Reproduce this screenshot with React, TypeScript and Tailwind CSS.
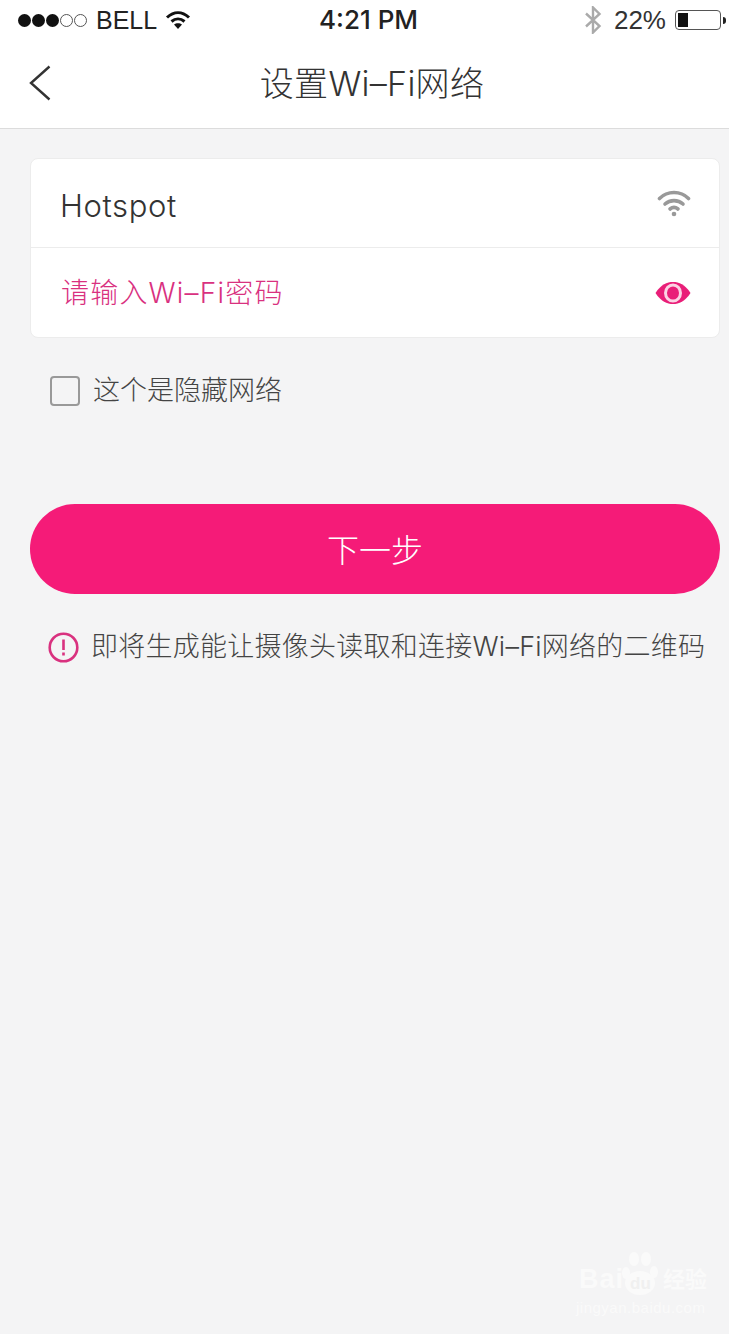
const cjk = "font-['Inter','Noto_Sans_CJK_SC',sans-serif]";

const StatusBar = () => (
  <div className="grid h-10 grid-cols-3 items-center pl-[18px] pr-[3px] font-['Liberation_Sans',sans-serif] text-[26px] text-[#222]">
    <div className="flex items-center">
      <div className="flex items-center gap-[1px]">
        <span className="h-[13px] w-[13px] rounded-full bg-[#111]" />
        <span className="h-[13px] w-[13px] rounded-full bg-[#111]" />
        <span className="h-[13px] w-[13px] rounded-full bg-[#111]" />
        <span className="h-[13px] w-[13px] rounded-full border border-[#555]" />
        <span className="h-[13px] w-[13px] rounded-full border border-[#555]" />
      </div>
      <span className="ml-[9px] text-[25px] leading-none">BELL</span>
      <svg className="ml-[8px]" width="26" height="20" viewBox="0 0 26 20" fill="none" stroke="#111" strokeWidth="3">
        <path d="M2 7.500C9 1 17 1 24 7.500" />
        <path d="M6.500 11.500C10.500 8 15.500 8 19.500 11.500" />
        <path d="M13 19l-4-4.500c2.300-1.800 5.700-1.800 8 0z" fill="#111" stroke="none" />
      </svg>
    </div>
    <div className="pl-[65px] font-['Inter',sans-serif] text-[26px] leading-none font-medium whitespace-nowrap text-[#222]">4:21 PM</div>
    <div className="flex items-center justify-end">
      <svg width="18" height="28" viewBox="0 0 18 28" fill="none" stroke="#aaa" strokeWidth="2.400">
        <path d="M2 7.500L15.500 20 9 26.500V1.500L15.500 8 2 20.500" />
      </svg>
      <span className="ml-[12px] text-[26px] leading-none text-[#333]">22%</span>
      <div className="ml-[9px] flex items-center">
        <div className="h-[20px] w-[46px] rounded-[4px] border border-[#555] p-[2px]">
          <div className="h-full w-[10px] bg-[#111]" />
        </div>
        <div className="ml-[2px] h-[7px] w-[3px] rounded-r-full bg-[#222]" />
      </div>
    </div>
  </div>
);

const Header = () => (
  <div className="flex h-[89px] items-center justify-center border-b border-[#dcdcdc] bg-white">
    <div className="relative flex w-full justify-center pl-[15px]">
      <svg className="absolute left-[28px] top-[3px]" width="24" height="36" viewBox="0 0 24 36" fill="none" stroke="#333" strokeWidth="2.400">
        <path d="M21.500 1.500L3 18l18.500 16.500" />
      </svg>
      <h1 className={`${cjk} text-[34px] leading-[44px] font-light tracking-[0.3px] text-[#333]`}>设置Wi–Fi网络</h1>
    </div>
  </div>
);

const WifiIcon = () => (
  <svg width="34" height="28" viewBox="0 0 34 28" fill="none" stroke="#999" strokeWidth="3.600" strokeLinecap="round">
    <path d="M2.500 9.500C10.500 1.500 23.500 1.500 31.500 9.500" />
    <path d="M8 15C13 10.500 21 10.500 26 15" />
    <path d="M13 20C15.500 18 18.500 18 21 20" />
    <circle cx="17" cy="25" r="2.300" fill="#999" stroke="none" />
  </svg>
);

const EyeIcon = () => (
  <svg width="36" height="24" viewBox="0 0 36 24">
    <path d="M0.500 12C6 3.500 12 1 18 1s12 2.500 17.500 11C30 20.500 24 23 18 23S6 20.500 0.500 12z" fill="#e91e78" />
    <ellipse cx="18" cy="12" rx="7.500" ry="8" fill="none" stroke="#fbd3e4" strokeWidth="3" />
  </svg>
);

const WifiForm = () => (
  <div className="ml-[30px] mr-[9px] mt-[29px] rounded-[8px] border border-[#ececec] bg-white">
    <div className="flex h-[89px] items-center justify-between border-b border-[#ececec] pl-[29px] pr-[28px]">
      <span className="pt-[7px] font-['Inter',sans-serif] text-[31px] font-light tracking-[0.6px] text-[#333]">Hotspot</span>
      <WifiIcon />
    </div>
    <div className="flex h-[89px] items-center justify-between pl-[30px] pr-[28px]">
      <span className={`${cjk} text-[28px] font-light tracking-[1.2px] text-[#d9317f]`}>请输入Wi–Fi密码</span>
      <EyeIcon />
    </div>
  </div>
);

const HiddenCheck = () => (
  <div className="ml-[50px] mt-[38px] flex items-center">
    <div className="h-[30px] w-[30px] rounded-[4px] border-2 border-[#999]" />
    <span className={`${cjk} ml-[13px] text-[27px] leading-[30px] font-light text-[#444]`}>这个是隐藏网络</span>
  </div>
);

const NextButton = () => (
  <button className={`${cjk} ml-[30px] mt-[98px] flex h-[90px] w-[690px] items-center justify-center rounded-full bg-[#f51b78] pt-[3px] text-[32px] font-light text-white`}>
    下一步
  </button>
);

const Hint = () => (
  <div className="ml-[48px] mt-[38px] flex items-center whitespace-nowrap">
    <svg width="31" height="31" viewBox="0 0 31 31" fill="none" stroke="#d9317f" strokeWidth="2.600">
      <circle cx="15.500" cy="15.500" r="13.800" />
      <path d="M15.500 7.500v10.500M15.500 20.500v3" />
    </svg>
    <span className={`${cjk} ml-[12px] -translate-y-[1px] text-[27px] leading-[30px] font-light tracking-[0.25px] text-[#444]`}>即将生成能让摄像头读取和连接Wi–Fi网络的二维码</span>
  </div>
);

const Watermark = () => (
  <div className="absolute left-[576px] top-[1252px] w-[134px] font-['Liberation_Sans',sans-serif] text-[#fafafa]">
    <div className="flex items-end">
      <span className="w-[44px] pl-[3px] text-[27px] leading-[34px] font-bold tracking-[1px]">Bai</span>
      <div className="relative h-[44px] w-[40px]">
        <svg width="40" height="44" viewBox="0 0 40 44" fill="#fafafa">
          <ellipse cx="6" cy="21" rx="4" ry="6" />
          <ellipse cx="14" cy="7" rx="5" ry="7" />
          <ellipse cx="26" cy="7" rx="5" ry="7" />
          <ellipse cx="34" cy="20" rx="4" ry="6" />
          <ellipse cx="20" cy="31" rx="15" ry="12" />
        </svg>
        <span className="absolute bottom-[4px] left-[10px] text-[17px] leading-none font-bold text-[#f0f0f0]">du</span>
      </div>
      <span className={`${cjk} ml-[3px] whitespace-nowrap text-[22px] leading-[34px] font-bold`}>经验</span>
    </div>
    <div className="mt-[3px] whitespace-nowrap text-[15px] leading-[18px] tracking-[0.5px]">jingyan.baidu.com</div>
  </div>
);

export default function App() {
  return (
    <div className="relative h-[1334px] w-[750px] overflow-hidden bg-white">
      <div className="relative h-full w-[729px] bg-[#f4f4f5]">
        <div className="bg-white">
          <StatusBar />
          <Header />
        </div>
        <WifiForm />
        <HiddenCheck />
        <NextButton />
        <Hint />
        <Watermark />
      </div>
    </div>
  );
}
